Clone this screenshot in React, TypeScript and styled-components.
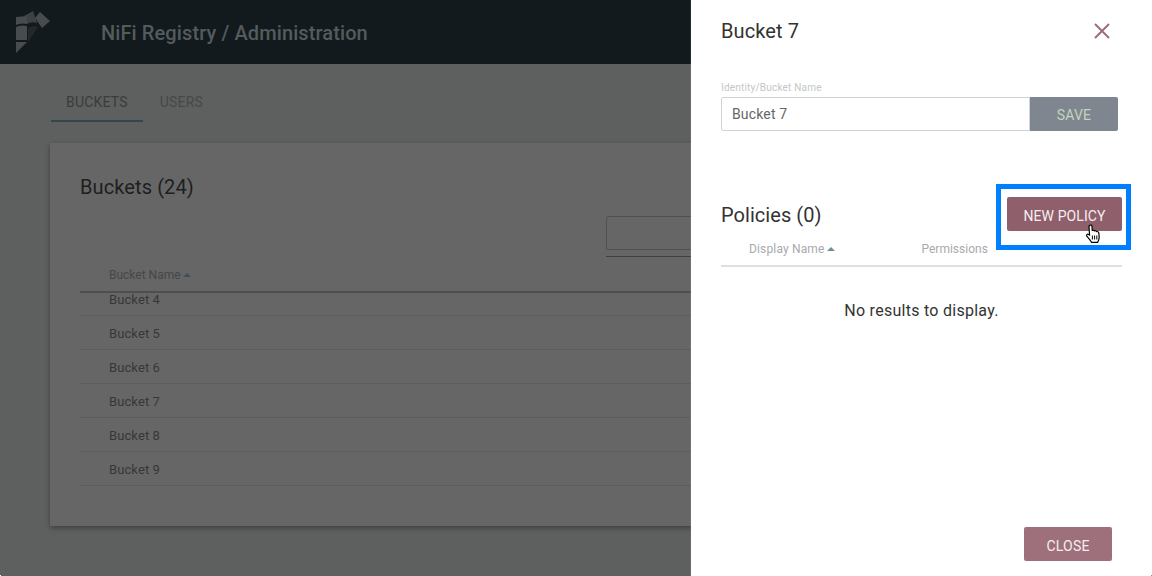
import React from 'react';
import styled, { createGlobalStyle } from 'styled-components';

const GlobalStyle = createGlobalStyle`
  html, body {
    margin: 0;
    padding: 0;
    background: #ffffff;
  }
  * {
    box-sizing: border-box;
  }
`;

const buckets = ['Bucket 4', 'Bucket 5', 'Bucket 6', 'Bucket 7', 'Bucket 8', 'Bucket 9'];

const Logo = () => (
  <LogoSvg viewBox="0 0 34 44" width="34" height="44">
    <path d="M0 7 L11 6 L11 14 Q5 12.5 0 15 Z" fill="#474d4f" />
    <path d="M0 17 Q5 14.5 11 16 L11 18 L11 30 L0 30 Z" fill="#474d4f" />
    <path d="M0 32 L11 32 L0 43 Z" fill="#474d4f" />
    <path d="M8 6 L17 1 L21 13 Q15 11 11 14 L11 6 Z" fill="#3d4345" />
    <path d="M24 2 L34 11 L26 18 L19 8 Z" fill="#474d4f" />
    <path d="M12 18 Q17 15 22 17 L12 32 Z" fill="#23292b" />
  </LogoSvg>
);

const HandCursor = () => (
  <CursorSvg viewBox="0 0 16 20" width="16" height="20">
    <path
      d="M4.5 1.5 C5.5 0.6 6.8 1 7 2.2 L7.2 6.5 C8 6 9 6.2 9.4 6.9 C10.2 6.5 11.2 6.8 11.5 7.6 C12.4 7.3 13.6 7.8 13.8 8.9 L14.2 13.2 C14.2 15.4 13.4 17 12.6 18.4 L6.6 18.4 C5.6 16.4 3.6 14.4 1.8 12.2 C1 11 2.2 9.6 3.6 10.4 L4.6 11.2 L4 3 C4 2.4 4.1 1.9 4.5 1.5 Z"
      fill="#ffffff"
      stroke="#000000"
      strokeWidth="1.2"
      strokeLinejoin="round"
    />
    <path d="M7.4 11.5 V15.5 M9.6 11.5 V15.5 M11.8 11.5 V15.5" stroke="#000000" strokeWidth="1" fill="none" />
  </CursorSvg>
);

const App: React.FC = () => {
  return (
    <Page>
      <GlobalStyle />
      <Header>
        <LogoSlot>
          <Logo />
        </LogoSlot>
        <HeaderTitle>NiFi Registry / Administration</HeaderTitle>
      </Header>
      <Tabs>
        <Tab active>BUCKETS</Tab>
        <Tab>USERS</Tab>
      </Tabs>
      <Card>
        <CardTitle>Buckets (24)</CardTitle>
        <SearchRow>
          <SearchBox />
          <SearchUnderline />
        </SearchRow>
        <TableHead>
          Bucket Name
          <SortCaret color="#3f4f57" />
        </TableHead>
        <RowsClip>
          <Rows>
            {buckets.map((name) => (
              <BucketRow key={name}>{name}</BucketRow>
            ))}
          </Rows>
        </RowsClip>
      </Card>

      <SidePanel>
        <PanelHead>
          <PanelTitle>Bucket 7</PanelTitle>
          <CloseIcon viewBox="0 0 16 16" width="16" height="16">
            <path d="M1 1 L15 15 M15 1 L1 15" stroke="#9b6c78" strokeWidth="1.9" fill="none" />
          </CloseIcon>
        </PanelHead>
        <FieldLabel>Identity/Bucket Name</FieldLabel>
        <FieldRow>
          <NameInput readOnly value="Bucket 7" />
          <SaveButton>SAVE</SaveButton>
        </FieldRow>
        <PoliciesHead>
          <PoliciesTitle>Policies (0)</PoliciesTitle>
          <NewPolicyButton>NEW POLICY</NewPolicyButton>
          <Highlight />
          <HandCursor />
        </PoliciesHead>
        <PolicyColumns>
          <DisplayNameCol>
            Display Name
            <SortCaret color="#6b8f9c" />
          </DisplayNameCol>
          <PermissionsCol>Permissions</PermissionsCol>
        </PolicyColumns>
        <EmptyText>No results to display.</EmptyText>
        <PanelFoot>
          <CloseButton>CLOSE</CloseButton>
        </PanelFoot>
      </SidePanel>
      <Corner side="left" />
      <Corner side="right" />
    </Page>
  );
};

const Page = styled.div`
  position: relative;
  width: 1152px;
  height: 576px;
  overflow: hidden;
  background: #5e605f;
  font-family: Roboto, 'Liberation Sans', sans-serif;
`;

const Corner = styled.div<{ side: 'left' | 'right' }>`
  position: absolute;
  bottom: 0;
  ${(p) => p.side}: 0;
  width: 3px;
  height: 3px;
  background: ${(p) =>
    p.side === 'left'
      ? 'radial-gradient(circle at 100% 0, transparent 3px, #ffffff 3px)'
      : 'radial-gradient(circle at 0 0, transparent 3px, #8a8a8a 3px)'};
`;

const Header = styled.header`
  display: flex;
  align-items: center;
  height: 64px;
  background: #121a1d;
`;

const LogoSlot = styled.div`
  display: flex;
  width: 101px;
  padding-left: 16px;
`;

const LogoSvg = styled.svg`
  display: block;
`;

const HeaderTitle = styled.h1`
  margin: 0;
  padding-top: 2px;
  font-size: 20px;
  font-weight: 500;
  letter-spacing: 0.1px;
  color: #555b5d;
`;

const Tabs = styled.nav`
  display: flex;
  gap: 2px;
  margin: 0 0 0 51px;
  height: 58px;
`;

const Tab = styled.div<{ active?: boolean }>`
  display: flex;
  align-items: center;
  justify-content: center;
  height: 58px;
  padding: 20px 15px 0;
  font-size: 14px;
  letter-spacing: 0.2px;
  color: ${(p) => (p.active ? '#383c3d' : '#464848')};
  border-bottom: 2px solid ${(p) => (p.active ? '#37444a' : 'transparent')};
`;

const Card = styled.section`
  width: 900px;
  height: 383px;
  margin: 21px 0 0 50px;
  padding: 31px 30px 0;
  background: #666666;
  box-shadow: 0 2px 5px rgba(0, 0, 0, 0.35);
`;

const CardTitle = styled.h2`
  margin: 0;
  height: 26px;
  font-size: 20px;
  line-height: 26px;
  font-weight: 400;
  letter-spacing: 0.1px;
  color: #1d1f20;
`;

const SearchRow = styled.div`
  display: flex;
  flex-direction: column;
  gap: 6px;
  height: 41px;
  margin: 16px 0 0;
  padding-left: 526px;
`;

const SearchBox = styled.div`
  width: 300px;
  height: 34px;
  border: 1px solid #4f5152;
  border-radius: 2px;
`;

const SearchUnderline = styled.div`
  width: 300px;
  height: 1px;
  background: #3f4142;
`;

const TableHead = styled.div`
  display: flex;
  align-items: center;
  height: 36px;
  padding: 1px 0 0 29px;
  font-size: 12px;
  color: #454747;
  border-bottom: 2px solid #4d4f4f;
`;

const SortCaret = styled.span<{ color: string }>`
  width: 0;
  height: 0;
  margin-left: 2px;
  border-left: 4px solid transparent;
  border-right: 4px solid transparent;
  border-bottom: 4px solid ${(p) => p.color};
`;

const RowsClip = styled.div`
  height: 200px;
  overflow: hidden;
`;

const Rows = styled.div`
  margin-top: -11px;
`;

const BucketRow = styled.div`
  display: flex;
  align-items: center;
  height: 34px;
  padding: 1px 0 0 29px;
  font-size: 13px;
  letter-spacing: 0.1px;
  color: #363838;
  border-bottom: 1px solid #5b5d5d;
`;

const SidePanel = styled.aside`
  position: absolute;
  top: 0;
  right: 0;
  bottom: 0;
  display: flex;
  flex-direction: column;
  width: 461px;
  padding: 0 30px;
  background: #ffffff;
  box-shadow: -1px 0 0 rgba(255, 255, 255, 0.08);
`;

const PanelHead = styled.div`
  display: flex;
  align-items: center;
  justify-content: space-between;
  height: 62px;
  padding-right: 12px;
`;

const PanelTitle = styled.h2`
  margin: 0;
  font-size: 20px;
  font-weight: 400;
  letter-spacing: 0.1px;
  color: #333333;
`;

const CloseIcon = styled.svg`
  display: block;
`;

const FieldLabel = styled.label`
  margin-top: 20px;
  height: 15px;
  font-size: 10px;
  line-height: 12px;
  letter-spacing: 0.2px;
  color: #c4c6c7;
`;

const FieldRow = styled.div`
  display: flex;
  width: 397px;
  height: 34px;
`;

const NameInput = styled.input`
  flex: 1;
  min-width: 0;
  height: 34px;
  padding: 0 10px;
  font-family: inherit;
  font-size: 14px;
  letter-spacing: 0.15px;
  color: #666666;
  background: #ffffff;
  border: 1px solid #cfd3d7;
  border-radius: 2px 0 0 2px;
  outline: none;
`;

const SaveButton = styled.button`
  width: 88px;
  height: 34px;
  padding: 1px 0 0;
  font-family: inherit;
  font-size: 14px;
  letter-spacing: 0.2px;
  color: #c3d4bd;
  background: #80868f;
  border: 0;
  border-radius: 0 2px 2px 0;
`;

const PoliciesHead = styled.div`
  position: relative;
  display: flex;
  align-items: center;
  justify-content: space-between;
  width: 401px;
  height: 34px;
  margin-top: 66px;
`;

const PoliciesTitle = styled.h3`
  margin: 0;
  padding-top: 2px;
  font-size: 20px;
  font-weight: 400;
  letter-spacing: 0.05px;
  color: #333333;
`;

const NewPolicyButton = styled.button`
  width: 115px;
  height: 34px;
  padding: 3px 0 0;
  font-family: inherit;
  font-size: 14px;
  letter-spacing: 0.1px;
  color: #f5eef0;
  background: #8f5f6c;
  border: 0;
  border-radius: 2px;
`;

const Highlight = styled.div`
  position: absolute;
  top: -13px;
  right: -9px;
  width: 135px;
  height: 66px;
  border: 5px solid #0080ff;
  pointer-events: none;
`;

const CursorSvg = styled.svg`
  position: absolute;
  top: 27px;
  right: 21px;
`;

const PolicyColumns = styled.div`
  display: flex;
  align-items: center;
  width: 401px;
  height: 36px;
  padding-top: 1px;
  font-size: 12px;
  color: #a8aaac;
  border-bottom: 2px solid #e0e0e0;
`;

const DisplayNameCol = styled.div`
  display: flex;
  align-items: center;
  width: 200.5px;
  padding-left: 28px;
  letter-spacing: 0.15px;
`;

const PermissionsCol = styled.div`
  flex: 1;
`;

const EmptyText = styled.p`
  width: 401px;
  margin: 34px 0 0;
  font-size: 16px;
  line-height: 20px;
  letter-spacing: 0.27px;
  text-align: center;
  color: #333333;
`;

const PanelFoot = styled.div`
  display: flex;
  justify-content: flex-end;
  margin-top: auto;
  width: 391px;
  padding-bottom: 15px;
`;

const CloseButton = styled.button`
  width: 88px;
  height: 34px;
  padding: 4px 0 0;
  font-family: inherit;
  font-size: 14px;
  letter-spacing: 0.2px;
  color: #f5eef0;
  background: #9d707c;
  border: 0;
  border-radius: 2px;
`;

export default App;
